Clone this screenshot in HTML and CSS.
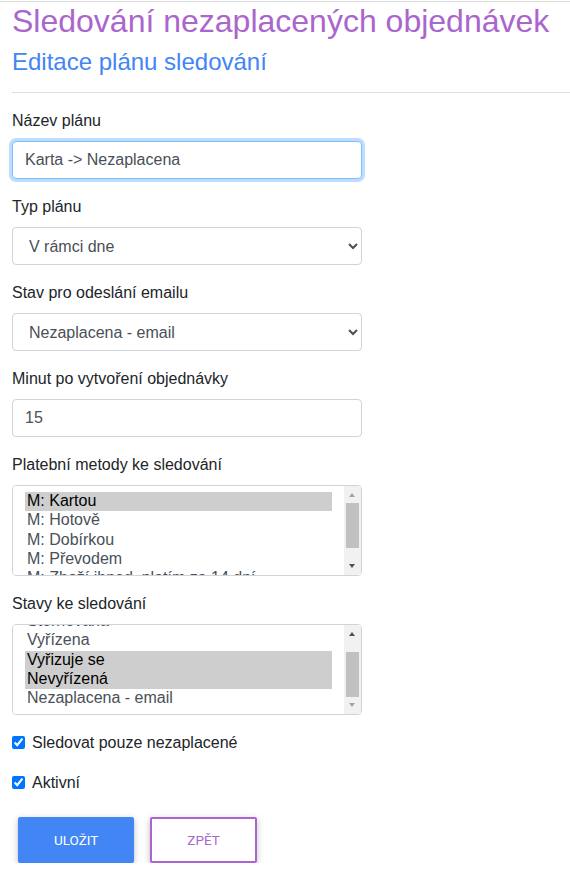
FILE: index.html
```html
<!DOCTYPE html>
<html>
<head>
    <meta charset="utf-8">
    <title>Sledování nezaplacených objednávek</title>
    <link rel="stylesheet" href="styles.css">
</head>
<body>
    <div class="page">
        <h2 class="title">Sledování nezaplacených objednávek</h2>
        <h4 class="subtitle">Editace plánu sledování</h4>
        <hr class="divider">

        <form class="plan-form">
            <div class="form-group">
                <label for="planName">Název plánu</label>
                <input type="text" id="planName" class="form-control focused" value="Karta -> Nezaplacena">
            </div>

            <div class="form-group">
                <label for="planType">Typ plánu</label>
                <select id="planType" class="form-control">
                    <option selected>V rámci dne</option>
                    <option>Po dnech</option>
                </select>
            </div>

            <div class="form-group">
                <label for="emailState">Stav pro odeslání emailu</label>
                <select id="emailState" class="form-control">
                    <option selected>Nezaplacena - email</option>
                    <option>Vyřízena</option>
                </select>
            </div>

            <div class="form-group">
                <label for="minutes">Minut po vytvoření objednávky</label>
                <input type="number" id="minutes" class="form-control" value="15">
            </div>

            <div class="form-group">
                <label for="payMethods">Platební metody ke sledování</label>
                <div class="list-box">
                    <select id="payMethods" class="form-control list-select" multiple size="4">
                        <option selected>M: Kartou</option>
                        <option>M: Hotově</option>
                        <option>M: Dobírkou</option>
                        <option>M: Převodem</option>
                        <option>M: Zboží ihned, platím za 14 dní</option>
                    </select>
                    <div class="scroll-bar at-top">
                        <span class="scroll-arrow up"></span>
                        <span class="scroll-thumb"></span>
                        <span class="scroll-arrow down"></span>
                    </div>
                </div>
            </div>

            <div class="form-group">
                <label for="states">Stavy ke sledování</label>
                <div class="list-box">
                    <select id="states" class="form-control list-select" multiple size="4">
                        <option>Stornována</option>
                        <option>Vyřízena</option>
                        <option selected>Vyřizuje se</option>
                        <option selected>Nevyřízená</option>
                        <option>Nezaplacena - email</option>
                    </select>
                    <div class="scroll-bar at-bottom">
                        <span class="scroll-arrow up"></span>
                        <span class="scroll-thumb"></span>
                        <span class="scroll-arrow down"></span>
                    </div>
                </div>
            </div>

            <div class="form-check">
                <input type="checkbox" id="onlyUnpaid" class="form-check-input" checked>
                <label for="onlyUnpaid">Sledovat pouze nezaplacené</label>
            </div>

            <div class="form-check">
                <input type="checkbox" id="active" class="form-check-input" checked>
                <label for="active">Aktivní</label>
            </div>

            <div class="actions">
                <button type="button" class="btn btn-primary">Uložit</button>
                <button type="button" class="btn btn-outline">Zpět</button>
            </div>
        </form>
    </div>
    <script src="app.js"></script>
</body>
</html>
```

FILE: styles.css
```css
body {
    margin: 0;
    background: #fff;
    color: #212529;
    font-family: "Liberation Sans", Arial, sans-serif;
    font-size: 16px;
    line-height: 1.5;
}
.page {
    margin-top: 1px;
    border-top: 1px solid #dedede;
    padding-left: 12px;
}
.title {
    margin: 0 0 8px;
    font-size: 32px;
    font-weight: 400;
    line-height: 1.2;
    color: #aa66cc;
}
.subtitle {
    margin: 0 0 8px;
    font-size: 24px;
    font-weight: 400;
    line-height: 1.2;
    color: #4285f4;
}
.divider {
    margin: 15px 0 16px;
    border: 0;
    border-top: 1px solid rgba(0, 0, 0, 0.12);
}
.form-group {
    margin-bottom: 16px;
}
.form-group label {
    display: inline-block;
    margin-bottom: 8px;
}
.form-control {
    display: block;
    box-sizing: border-box;
    width: 350px;
    height: 38px;
    padding: 6px 12px;
    font-family: inherit;
    font-size: 16px;
    line-height: 1.5;
    color: #495057;
    background: #fff;
    border: 1px solid #ced4da;
    border-radius: 4px;
}
.form-control.focused {
    border-color: #80bdff;
    outline: 0;
    box-shadow: 0 0 0 3px rgba(0, 123, 255, 0.25);
}

/* multi selects with a classic scrollbar drawn over the right edge */
.list-box {
    position: relative;
    width: 350px;
}
.list-select {
    height: 91px;
    padding-right: 29px;
    scrollbar-width: none;
}
.list-select option {
    padding: 0 2px;
    color: #495057;
}
.list-select option:checked {
    background: #cecece linear-gradient(#cecece, #cecece);
    color: #000;
}
.scroll-bar {
    position: absolute;
    top: 1px;
    right: 1px;
    bottom: 1px;
    width: 17px;
    display: flex;
    flex-direction: column;
    background: #f1f1f1;
    border-radius: 0 3px 3px 0;
    pointer-events: none;
}
.scroll-arrow {
    position: relative;
    height: 17px;
    flex: none;
}
.scroll-arrow::after {
    content: "";
    position: absolute;
    left: 5px;
    border-left: 3.5px solid transparent;
    border-right: 3.5px solid transparent;
}
.scroll-arrow.up::after {
    top: 7px;
    border-bottom: 4px solid #505050;
}
.scroll-arrow.down::after {
    top: 6px;
    border-top: 4px solid #505050;
}
.at-top .scroll-arrow.up::after {
    border-bottom-color: #a3a3a3;
}
.at-bottom .scroll-arrow.down::after {
    border-top-color: #a3a3a3;
}
.scroll-thumb {
    height: 45px;
    margin: 0 2px;
    background: #c1c1c1;
}
.at-top .scroll-thumb {
    margin-bottom: auto;
}
.at-bottom .scroll-thumb {
    margin-top: auto;
}

.form-check {
    display: flex;
    align-items: flex-start;
    margin-bottom: 16px;
}
.form-check-input {
    width: 13px;
    height: 13px;
    margin: 5px 7px 0 0;
}
.actions {
    display: flex;
    gap: 16px;
    padding: 6px 0 0 6px;
}
.btn {
    padding: 13.5px 36px;
    font-family: Roboto, "Liberation Sans", sans-serif;
    font-size: 13.5px;
    line-height: 19px;
    text-transform: uppercase;
    border: 0;
    border-radius: 2px;
    cursor: pointer;
    box-shadow: 0 2px 5px 0 rgba(0, 0, 0, 0.16), 0 2px 10px 0 rgba(0, 0, 0, 0.12);
}
.btn-primary {
    background: #4285f4;
    color: #fff;
}
.btn-outline {
    background: #fff;
    color: #aa66cc;
    border: 2px solid #aa66cc;
    padding: 11.5px 35px;
}
```

FILE: app.js
```js
// the state list is shown scrolled down to the last state
var states = document.getElementById('states');
states.scrollTop = 19;
```
